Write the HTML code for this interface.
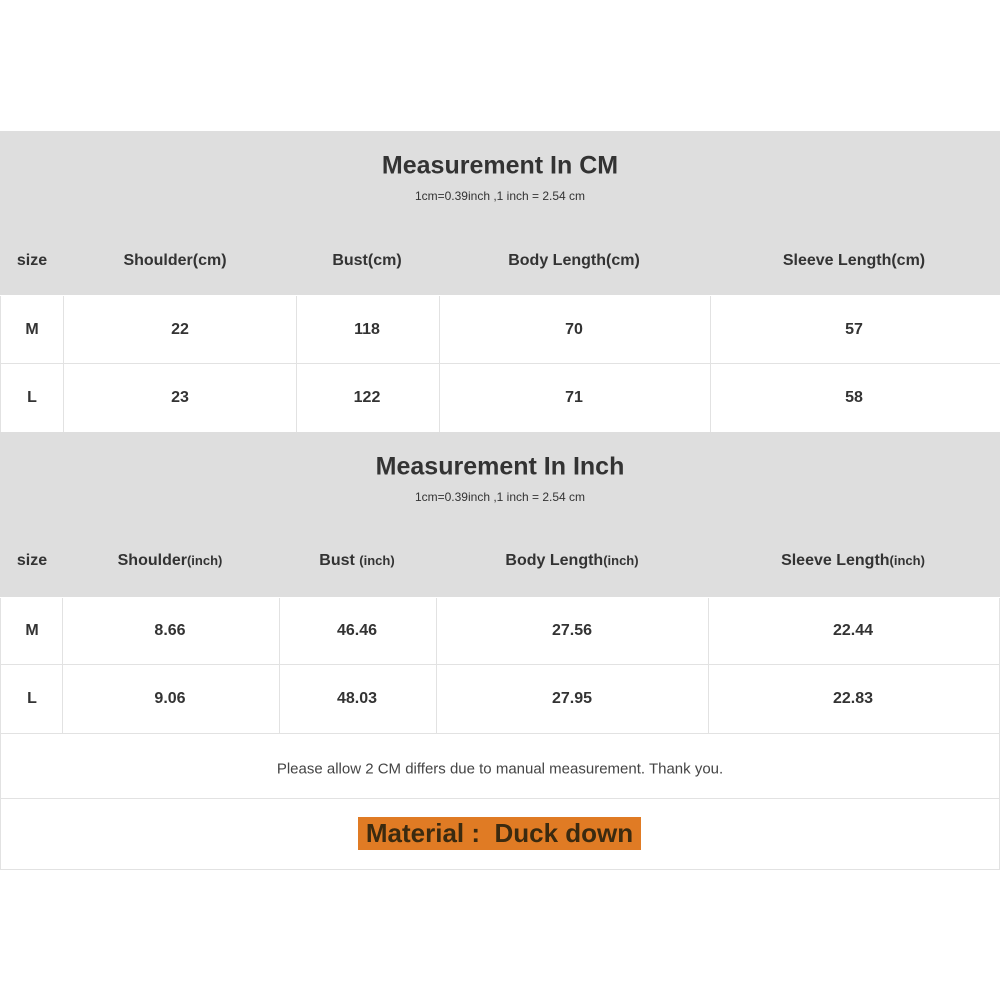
<!DOCTYPE html><html><head><style>
body{margin:0;width:1000px;height:1000px;background:#fff;position:relative;font-family:"Liberation Sans",sans-serif;color:#333;overflow:hidden}
.a{position:absolute}
.g{background:#dedede}
.t{position:absolute;transform:translate(-50%,-50%);white-space:nowrap;font-weight:bold;font-size:16px}
.vl{position:absolute;width:1px;background:#e2e2e2}
.hl{position:absolute;height:1px;background:#e2e2e2;left:0;width:1000px}
small{font-size:13px}
</style></head><body>
<div class="a g" style="left:0;top:131px;width:1000px;height:164px"></div>
<div class="a g" style="left:0;top:432px;width:1000px;height:165px"></div>
<div class="t" style="left:500px;top:166px;font-size:25px">Measurement In CM</div>
<div class="t" style="left:500px;top:196px;font-size:12px;font-weight:normal">1cm=0.39inch ,1 inch = 2.54 cm</div>
<div class="t" style="left:32px;top:261px">size</div>
<div class="t" style="left:175px;top:261px">Shoulder(cm)</div>
<div class="t" style="left:367px;top:261px">Bust(cm)</div>
<div class="t" style="left:574px;top:261px">Body Length(cm)</div>
<div class="t" style="left:854px;top:261px">Sleeve Length(cm)</div>
<div class="vl" style="left:63px;top:296px;height:136px"></div>
<div class="vl" style="left:296px;top:296px;height:136px"></div>
<div class="vl" style="left:439px;top:296px;height:136px"></div>
<div class="vl" style="left:710px;top:296px;height:136px"></div>
<div class="vl" style="left:0;top:296px;height:136px"></div>
<div class="hl" style="top:363px"></div>
<div class="t" style="left:32px;top:330px">M</div><div class="t" style="left:180px;top:330px">22</div><div class="t" style="left:367px;top:330px">118</div><div class="t" style="left:574px;top:330px">70</div><div class="t" style="left:854px;top:330px">57</div>
<div class="t" style="left:32px;top:398px">L</div><div class="t" style="left:180px;top:398px">23</div><div class="t" style="left:367px;top:398px">122</div><div class="t" style="left:574px;top:398px">71</div><div class="t" style="left:854px;top:398px">58</div>

<div class="t" style="left:500px;top:467px;font-size:25px">Measurement In Inch</div>
<div class="t" style="left:500px;top:497px;font-size:12px;font-weight:normal">1cm=0.39inch ,1 inch = 2.54 cm</div>
<div class="t" style="left:32px;top:561px">size</div>
<div class="t" style="left:170px;top:561px">Shoulder<small>(inch)</small></div>
<div class="t" style="left:357px;top:561px">Bust <small>(inch)</small></div>
<div class="t" style="left:572px;top:561px">Body Length<small>(inch)</small></div>
<div class="t" style="left:853px;top:561px">Sleeve Length<small>(inch)</small></div>
<div class="vl" style="left:62px;top:598px;height:136px"></div>
<div class="vl" style="left:279px;top:598px;height:136px"></div>
<div class="vl" style="left:436px;top:598px;height:136px"></div>
<div class="vl" style="left:708px;top:598px;height:136px"></div>
<div class="vl" style="left:0;top:598px;height:272px"></div>
<div class="vl" style="left:999px;top:598px;height:272px"></div>
<div class="hl" style="top:664px"></div>
<div class="t" style="left:32px;top:631px">M</div><div class="t" style="left:170px;top:631px">8.66</div><div class="t" style="left:357px;top:631px">46.46</div><div class="t" style="left:572px;top:631px">27.56</div><div class="t" style="left:853px;top:631px">22.44</div>
<div class="t" style="left:32px;top:699px">L</div><div class="t" style="left:170px;top:699px">9.06</div><div class="t" style="left:357px;top:699px">48.03</div><div class="t" style="left:572px;top:699px">27.95</div><div class="t" style="left:853px;top:699px">22.83</div>
<div class="hl" style="top:733px"></div>
<div class="t" style="left:500px;top:769px;font-size:15px;font-weight:normal;color:#444">Please allow 2 CM differs due to manual measurement. Thank you.</div>
<div class="hl" style="top:798px"></div>
<div class="a" style="left:358px;top:817px;width:283px;height:33px;background:#e07b24;display:flex;align-items:center;justify-content:center;font-weight:bold;font-size:26px;color:#3a2a10;white-space:nowrap;overflow:hidden">Material :&nbsp; Duck down</div>
<div class="hl" style="top:869px"></div>
</body></html>
